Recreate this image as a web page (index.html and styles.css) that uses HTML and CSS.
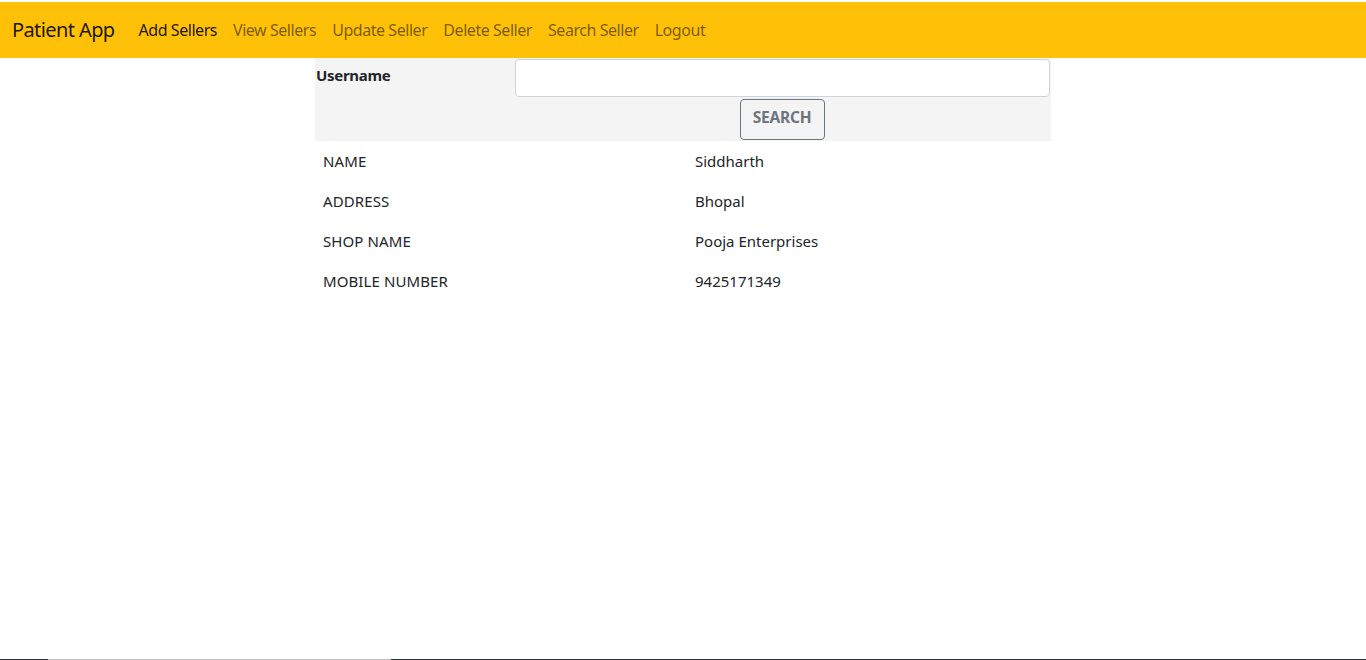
FILE: index.html
```html
<!DOCTYPE html>
<html>
<head>
<meta charset="utf-8">
<title>Patient App</title>
<link rel="stylesheet" href="styles.css">
</head>
<body>
<nav class="navbar">
  <a class="brand" href="#">Patient App</a>
  <ul class="nav">
    <li><a class="nav-link active" href="#">Add Sellers</a></li>
    <li><a class="nav-link" href="#">View Sellers</a></li>
    <li><a class="nav-link" href="#">Update Seller</a></li>
    <li><a class="nav-link" href="#">Delete Seller</a></li>
    <li><a class="nav-link" href="#">Search Seller</a></li>
    <li><a class="nav-link" href="#">Logout</a></li>
  </ul>
</nav>
<main class="container">
  <form class="search-form">
    <div class="form-row">
      <label class="label" for="username">Username</label>
      <input class="input" id="username" type="text">
    </div>
    <div class="btn-row">
      <button class="btn" type="button">SEARCH</button>
    </div>
  </form>
  <table class="table">
    <tr><td class="key">NAME</td><td>Siddharth</td></tr>
    <tr><td class="key">ADDRESS</td><td>Bhopal</td></tr>
    <tr><td class="key">SHOP NAME</td><td>Pooja Enterprises</td></tr>
    <tr><td class="key">MOBILE NUMBER</td><td>9425171349</td></tr>
  </table>
</main>
<div class="scrollbar"><div class="thumb"></div></div>
</body>
</html>
```
FILE: styles.css
```css
* { box-sizing: border-box; }
html, body { height: 100%; }
body {
  margin: 0;
  padding-top: 2px;
  font-family: "Noto Sans", "Open Sans", sans-serif;
  font-size: 16px;
  line-height: 1.5;
  color: #212529;
  background: #fff;
  position: relative;
  overflow: hidden;
}
.navbar {
  display: flex;
  align-items: center;
  background: #ffc107;
  padding: 8px 12px;
  height: 56px;
}
.brand {
  font-size: 20px;
  line-height: 30px;
  color: rgba(0,0,0,0.9);
  text-decoration: none;
  margin-right: 16px;
  letter-spacing: -0.6px;
}
.nav {
  display: flex;
  list-style: none;
  margin: 0;
  padding: 0;
}
.nav-link {
  display: block;
  padding: 8px 8px;
  color: rgba(0,0,0,0.55);
  text-decoration: none;
  letter-spacing: -0.45px;
}
.nav-link.active { color: rgba(0,0,0,0.9); }
.container {
  width: 736px;
  margin: 0 auto;
}
.search-form {
  background: #f4f4f4;
  padding: 1px;
}
.form-row {
  display: flex;
  align-items: flex-start;
}
.label {
  width: 199px;
  font-weight: 700;
  font-size: 15px;
  padding-top: 5px;
  letter-spacing: -0.3px;
}
.input {
  flex: 1;
  height: 38px;
  border: 1px solid #ced4da;
  border-radius: 4px;
  background: #fff;
  font: inherit;
}
.btn-row {
  display: flex;
  justify-content: center;
  padding: 2px 0 0 198px;
}
.btn {
  height: 41px;
  width: 85px;
  border: 1px solid #6c757d;
  border-radius: 4px;
  background: transparent;
  color: #6c757d;
  font-family: inherit;
  font-weight: 700;
  font-size: 15.5px;
  letter-spacing: -0.2px;
  padding: 0 0 6px;
}
.table {
  width: 100%;
  border-collapse: collapse;
  margin-top: 1px;
}
.table td {
  padding: 7px 8px 9px;
  font-size: 15px;
  vertical-align: middle;
  height: 40px;
}
.table td.key {
  width: 372px;
  letter-spacing: 0.1px;
}
.scrollbar {
  position: absolute;
  left: 0;
  right: 0;
  bottom: 0;
  height: 1px;
  background: #2b3335;
}
.thumb {
  margin-left: 48px;
  width: 343px;
  height: 1px;
  background: #c0c0c0;
}
```
